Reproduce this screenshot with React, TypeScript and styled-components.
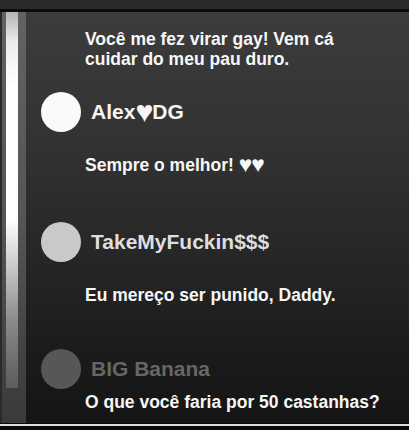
import React, { FC, ReactNode } from "react";
import styled, { createGlobalStyle } from "styled-components";

type Entry = {
  name?: ReactNode;
  avatar?: string;
  nameColor?: string;
  text: ReactNode;
  top: number;
  textGap: number;
  width?: number;
};

const getEntries = (): Entry[] => [
  {
    text: "Você me fez virar gay! Vem cá cuidar do meu pau duro.",
    top: 17,
    textGap: 0,
    width: 270,
  },
  {
    name: (
      <>
        Alex<Heart $scale={1.45} $drop={3}>♥</Heart>DG
      </>
    ),
    avatar: "#fafafa",
    nameColor: "#f6f6f6",
    text: (
      <>
        Sempre o melhor! <Heart $scale={1.3} $drop={1}>♥♥</Heart>
      </>
    ),
    top: 23,
    textGap: 23,
  },
  {
    name: "TakeMyFuckin$$$",
    avatar: "#c9c9c9",
    nameColor: "#dedede",
    text: "Eu mereço ser punido, Daddy.",
    top: 47,
    textGap: 23,
  },
  {
    name: "BIG Banana",
    avatar: "#575757",
    nameColor: "#666666",
    text: "O que você faria por 50 castanhas?",
    top: 44,
    textGap: 3,
  },
];

const App: FC = () => {
  const entries = getEntries();

  return (
    <Screen>
      <GlobalStyle />
      <TopBand />
      <Body>
        <Rail>
          <Bar />
        </Rail>
        <Feed>
          {entries.map((e, i) => (
            <Item key={i} $top={e.top}>
              {e.name && (
                <Author>
                  <Avatar $color={e.avatar!} />
                  <Name $color={e.nameColor!}>{e.name}</Name>
                </Author>
              )}
              <Message $gap={e.textGap} $width={e.width}>
                {e.text}
              </Message>
            </Item>
          ))}
        </Feed>
      </Body>
      <BottomEdge />
    </Screen>
  );
};

const GlobalStyle = createGlobalStyle`
  html, body {
    margin: 0;
    padding: 0;
    background: #0b0b0b;
  }
  body {
    font-family: "Liberation Sans", Arial, "DejaVu Sans", sans-serif;
  }
`;

const Screen = styled.div`
  width: 409px;
  height: 430px;
  display: flex;
  flex-direction: column;
  overflow: hidden;
  background: #0b0b0b;
`;

const TopBand = styled.div`
  height: 9px;
  background: #2b2b2b;
  border-bottom: 3px solid #0c0c0c;
  flex-shrink: 0;
`;

const Body = styled.div`
  height: 411px;
  display: flex;
  flex-shrink: 0;
  background: linear-gradient(
    to bottom,
    #3c3c3c 0%,
    #333333 30%,
    #262626 60%,
    #1a1a1a 85%,
    #151515 100%
  );
`;

const Rail = styled.div`
  width: 26px;
  flex-shrink: 0;
  padding: 0 8px 0 6px;
  box-sizing: border-box;
  background: linear-gradient(
      to right,
      #2a2a2a 0,
      #2a2a2a 2px,
      rgba(0, 0, 0, 0) 2px
    ),
    linear-gradient(to bottom, #626262 0%, #555555 50%, #3a3a3a 100%);
`;

const Bar = styled.div`
  height: 376px;
  background: linear-gradient(
    to bottom,
    #b4b4b4 0%,
    #ececec 8%,
    #ffffff 20%,
    #ffffff 55%,
    #c8c8c8 68%,
    #8a8a8a 82%,
    #5c5c5c 100%
  );
`;

const Feed = styled.div`
  flex: 1;
  display: flex;
  flex-direction: column;
  padding-left: 15px;
`;

const Item = styled.div<{ $top: number }>`
  margin-top: ${({ $top }) => $top}px;
  display: flex;
  flex-direction: column;
`;

const Author = styled.div`
  display: flex;
  align-items: center;
  gap: 10px;
  height: 40px;
`;

const Avatar = styled.div<{ $color: string }>`
  width: 40px;
  height: 40px;
  border-radius: 50%;
  background: ${({ $color }) => $color};
  flex-shrink: 0;
`;

const Name = styled.span<{ $color: string }>`
  font-size: 21px;
  font-weight: 700;
  line-height: 40px;
  color: ${({ $color }) => $color};
  white-space: nowrap;
`;

const Heart = styled.span<{ $scale: number; $drop: number }>`
  font-size: ${({ $scale }) => $scale}em;
  line-height: 0;
  vertical-align: -${({ $drop }) => $drop}px;
  letter-spacing: -0.04em;
`;

const Message = styled.p<{ $gap: number; $width?: number }>`
  margin: ${({ $gap }) => $gap}px 0 0 44px;
  width: ${({ $width }) => ($width ? `${$width}px` : "auto")};
  font-size: 17.5px;
  font-weight: 700;
  line-height: 20px;
  color: #f7f7f7;
  white-space: ${({ $width }) => ($width ? "normal" : "nowrap")};
`;

const BottomEdge = styled.div`
  height: 7px;
  flex-shrink: 0;
  border-top: 2px solid #dcdcdc;
  box-sizing: border-box;
  margin-top: 1px;
  background: #0b0b0b;
`;

export default App;
